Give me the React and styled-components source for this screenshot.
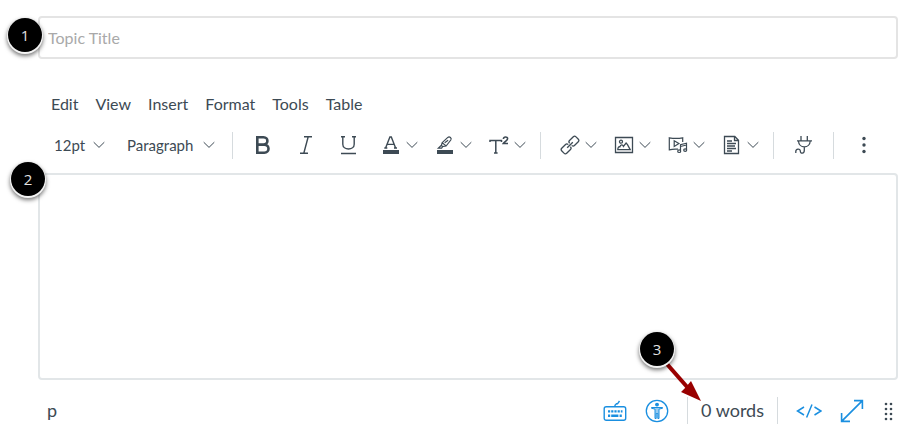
import styled, {createGlobalStyle} from "styled-components";

const ink = "#3d4a54";
const blue = "#1a8fe0";
const line = "#d6dbde";

const GlobalStyle = createGlobalStyle`
  * {
    box-sizing: border-box;
  }
  body {
    margin: 0;
    background: #fff;
    color: ${ink};
    font-family: Lato, "Liberation Sans", sans-serif;
  }
`;

const Page = styled.main`
  display: flex;
  flex-direction: column;
  padding: 16px 6px 0 38px;
`;

const Anchor = styled.div`
  position: relative;
  display: flex;
`;

const TitleInput = styled.input`
  width: 100%;
  height: 43px;
  padding: 0 8px;
  border: 2px solid #e4e4e4;
  border-radius: 4px;
  background: #fff;
  color: ${ink};
  font: inherit;
  font-size: 16px;
  &::placeholder {
    color: #a9a9a9;
    opacity: 1;
  }
`;

const MenuBar = styled.nav`
  display: flex;
  gap: 17px;
  margin-top: 32px;
  padding-left: 13px;
`;

const MenuButton = styled.button`
  padding: 0;
  border: 0;
  background: transparent;
  color: inherit;
  font: inherit;
  font-size: 16px;
  line-height: 26px;
  cursor: pointer;
`;

const Toolbar = styled.div`
  display: flex;
  align-items: center;
  height: 56px;
`;

const Group = styled.div`
  display: flex;
  align-items: center;
  height: 27px;
  padding: 0 8px;
  & + & {
    border-left: 1px solid ${line};
  }
`;

const FormatGroup = styled(Group)`
  gap: 22px;
  padding: 0 17px 0 16px;
`;

const SelectWrap = styled.label`
  display: flex;
  align-items: center;
  width: ${props => props.$width};
  select {
    flex: 1;
    min-width: 0;
    padding: 0;
    border: 0;
    appearance: none;
    background: transparent;
    color: inherit;
    font: inherit;
    font-size: 15px;
    cursor: pointer;
  }
`;

const ToolButton = styled.button`
  display: flex;
  align-items: center;
  justify-content: center;
  width: 43px;
  height: 32px;
  padding: 0;
  border: 0;
  background: transparent;
  color: inherit;
  cursor: pointer;
`;

const SplitButton = styled(ToolButton)`
  justify-content: flex-end;
  gap: 5px;
  width: 54px;
  padding-right: 6px;
`;

const EditorArea = styled.textarea`
  width: 100%;
  height: 207px;
  padding: 12px;
  border: 2px solid #e2e6e8;
  border-radius: 4px;
  background: #fff;
  color: ${ink};
  font: inherit;
  resize: none;
`;

const StatusBar = styled.footer`
  display: flex;
  align-items: center;
  justify-content: space-between;
  padding: 17px 4px 0 9px;
  font-size: 18px;
  line-height: 27px;
`;

const StatusTools = styled.div`
  display: flex;
  align-items: center;
  gap: 18px;
`;

const WordCount = styled.div`
  position: relative;
  padding: 0 13px;
  border: solid ${line};
  border-width: 0 1px;
`;

const StatusButton = styled.button`
  display: flex;
  padding: 0;
  border: 0;
  background: transparent;
  color: ${props => props.$dark ? ink : blue};
  cursor: pointer;
`;

const Badge = styled.span`
  position: absolute;
  left: ${props => props.$left};
  top: ${props => props.$top};
  display: flex;
  align-items: center;
  justify-content: center;
  width: 34px;
  height: 34px;
  border-radius: 50%;
  background: #000;
  box-shadow: 0 1px 0 1px #f4f4f4, 0 3px 4px 1px rgba(0, 0, 0, .55);
  color: #e2e2e2;
  font-family: "Open Sans", sans-serif;
  font-size: 15px;
  line-height: 20px;
`;

const Arrow = styled.svg`
  position: absolute;
  left: -22px;
  top: -36px;
  pointer-events: none;
`;

function Icon({width = 20, height = 20, weight = 1.2, children}) {
  return (
    <svg width={width} height={height} viewBox={`0 0 ${width} ${height}`} fill="none"
      stroke="currentColor" strokeWidth={weight} aria-hidden="true">
      {children}
    </svg>
  );
}

function Chevron() {
  return (
    <Icon width={12} height={8} weight={1}>
      <path d="M.7 1.2 6 6.4l5.3-5.2" />
    </Icon>
  );
}

const BoldIcon = () => (
  <Icon weight={2.6}>
    <path d="M4.3 2.3h6.2c5.2 0 5.2 7.3 0 7.3H4.3zM4.3 9.6h7c5.6 0 5.6 8.1 0 8.1h-7z" />
  </Icon>
);

const ItalicIcon = () => (
  <Icon weight={1.4}>
    <path d="M8 1.7h8M4 18.3h8M12.2 1.7l-4.4 16.6" />
  </Icon>
);

const UnderlineIcon = () => (
  <Icon weight={1.4}>
    <path d="M2 1.7h4M13 1.7h4M3.8 1.7v7.5c0 6.4 11.4 6.4 11.4 0V1.7M2 18.5h15" />
  </Icon>
);

const TextColorIcon = () => (
  <Icon>
    <path strokeWidth="1.4" d="m4.6 13 4.3-11h1.4l4.3 11M6.2 9.4h6.9M3.3 13h3M13 13h3" />
    <path fill="currentColor" stroke="none" d="M2 15h16v4H2z" />
  </Icon>
);

const HighlightIcon = () => (
  <Icon>
    <path d="m7.2 7.6 5.6-5.2c1.8-1.3 4.2.8 3 2.6l-4.700 6-3.700.5-1-1.200zM7.500 8l3.600 2.900M9.700 7.700l3.400-2.500M6.400 10.300l-3 2.800h3.200l1.200-1.400" />
    <path fill="currentColor" stroke="none" d="M2 15h16v4H2z" />
  </Icon>
);

const SuperscriptIcon = () => (
  <Icon>
    <path strokeWidth="1.5" d="M1 7V5.600h11.500V7M6.800 5.600V18M5 18h3.600" />
    <path strokeWidth="1.6" d="M14.400 4c.2-2.700 4.200-2.500 4.200-.3 0 1.800-3.100 2.800-4.300 4.800H19" />
  </Icon>
);

const LinkIcon = () => (
  <Icon weight={1.3}>
    <g transform="rotate(-45 10 10)">
      <path d="M9 11.500c0 1.300-.6 2-1.800 2H1.800c-1.200 0-1.800-.7-1.800-2v-3c0-1.300.6-2 1.800-2h5.400c1.200 0 1.800.7 1.800 2" />
      <path d="M11 8.500c0-1.300.6-2 1.800-2h5.400c1.200 0 1.800.7 1.800 2v3c0 1.300-.6 2-1.800 2h-5.400c-1.200 0-1.800-.7-1.800-2" />
      <path d="M6 10h8" />
    </g>
  </Icon>
);

const ImageIcon = () => (
  <Icon weight={1.3}>
    <path d="M1.500 2.500h17v15h-17z" />
    <circle cx="7" cy="6.700" r="1.500" />
    <path d="M3.800 14.600c0-2 .8-3.200 2.100-2.800.6-2.400 2.800-2.500 3.500-.4l2.700-3.400 1.400 1.600 2.700 5z" />
  </Icon>
);

const MediaIcon = () => (
  <Icon>
    <path d="M10 14.200c-3-.2-6-.1-8.700.6V2.800c4.500.9 8.900.9 13.400 0V7" />
    <path d="M6.200 5.800v5.600l4.700-2.800z" />
    <path d="M12.500 15.800V9.700l6-1.500v6.500M12.500 11.500l6-1.500" />
    <ellipse cx="11.200" cy="16.200" rx="1.500" ry="1.300" />
    <ellipse cx="17.200" cy="15.100" rx="1.500" ry="1.300" />
  </Icon>
);

const DocumentIcon = () => (
  <Icon weight={1.3}>
    <path d="M2.500 1.500h10.300l3.700 3.700v13.300h-14zM12.500 1.500v4h4" />
    <path d="M5 6h5M5 8.500h9M5 11h8M5 13.500h9M5 16h5" />
  </Icon>
);

const PlugIcon = () => (
  <Icon weight={1.3}>
    <path d="M7 1v4.500M13.300 1v4.500M3 5.800h15M4.500 6c.2 7.800 11.500 7.800 11.700 0M10.300 12v3.300c0 3.800-4 3.700-4 .8 0-2.800-4.500-2.600-4.500.5V18" />
  </Icon>
);

const MoreIcon = () => (
  <Icon>
    <g fill="currentColor" stroke="none">
      <circle cx="10" cy="3.500" r="1.700" />
      <circle cx="10" cy="10" r="1.700" />
      <circle cx="10" cy="16.500" r="1.700" />
    </g>
  </Icon>
);

const KeyboardIcon = () => (
  <Icon width={24} height={24} weight={1.4}>
    <rect x="1.200" y="7.700" width="21.500" height="13.600" rx="2" />
    <path d="M12 7.500V6.300l1.500-1.500h1l2-2.800" />
    <path strokeWidth="2.400" strokeDasharray="2.200 1" d="M5 12.400h14.500" />
    <path strokeWidth="2.400" d="M5 16.700h2.200M8.200 16.700h7.200M16.600 16.700h2.200" />
  </Icon>
);

const AccessibilityIcon = () => (
  <Icon width={24} height={24} weight={1.3}>
    <circle cx="12" cy="12" r="10.700" />
    <circle cx="12" cy="5.600" r="1.300" fill="currentColor" />
    <path d="M6.500 8.500h11v.8l-3.500.8v9.400h-1.200v-5h-1.600v5H10v-9.400l-3.500-.8z" strokeWidth="1" fill="currentColor" fillOpacity=".45" />
  </Icon>
);

const CodeIcon = () => (
  <Icon width={26} height={20} weight={1.5}>
    <path d="M8 6 1.500 10 8 14M18.500 6l6.500 4-6.500 4M16 3.500l-5.400 13" />
  </Icon>
);

const ExpandIcon = () => (
  <Icon width={24} height={24} weight={1.6}>
    <path d="M1.600 22.400 22.400 1.600M14 1.600h8.400V10M1.600 14v8.400H10" />
  </Icon>
);

const DragIcon = () => (
  <Icon width={12} height={20}>
    <g fill="currentColor" stroke="none">
      {[3, 8, 13, 18].map(y => (
        <g key={y}>
          <circle cx="4" cy={y} r="1.300" />
          <circle cx="9" cy={y} r="1.300" />
        </g>
      ))}
    </g>
  </Icon>
);

const menus = ["Edit", "View", "Insert", "Format", "Tools", "Table"];

const styleTools = [
  ["Bold", BoldIcon],
  ["Italic", ItalicIcon],
  ["Underline", UnderlineIcon],
];

const colorTools = [
  ["Text color", TextColorIcon],
  ["Background color", HighlightIcon],
  ["Superscript and subscript", SuperscriptIcon],
];

const insertTools = [
  ["Links", LinkIcon],
  ["Images", ImageIcon],
  ["Record or upload media", MediaIcon],
  ["Documents", DocumentIcon],
];

function renderTools(tools) {
  return tools.map(([label, Glyph]) => (
    <ToolButton key={label} type="button" aria-label={label}>
      <Glyph />
    </ToolButton>
  ));
}

function renderSplitTools(tools) {
  return tools.map(([label, Glyph]) => (
    <SplitButton key={label} type="button" aria-label={label}>
      <Glyph />
      <Chevron />
    </SplitButton>
  ));
}

export default function App() {
  return (
    <>
      <GlobalStyle />
      <Page>
        <Anchor>
          <TitleInput type="text" placeholder="Topic Title" aria-label="Topic Title" />
          <Badge $left="-30px" $top="2px">1</Badge>
        </Anchor>
        <MenuBar>
          {menus.map(name => (
            <MenuButton key={name} type="button">{name}</MenuButton>
          ))}
        </MenuBar>
        <Toolbar role="toolbar">
          <FormatGroup>
            <SelectWrap $width="51px">
              <select aria-label="Font size">
                <option>12pt</option>
              </select>
              <Chevron />
            </SelectWrap>
            <SelectWrap $width="88px">
              <select aria-label="Block style">
                <option>Paragraph</option>
              </select>
              <Chevron />
            </SelectWrap>
          </FormatGroup>
          <Group>
            {renderTools(styleTools)}
            {renderSplitTools(colorTools)}
          </Group>
          <Group>
            {renderSplitTools(insertTools)}
          </Group>
          <Group>
            {renderTools([["Apps", PlugIcon]])}
          </Group>
          <Group>
            {renderTools([["More", MoreIcon]])}
          </Group>
        </Toolbar>
        <Anchor>
          <EditorArea aria-label="Topic content" />
          <Badge $left="-27px" $top="-11px">2</Badge>
        </Anchor>
        <StatusBar>
          <span>p</span>
          <StatusTools>
            <StatusButton type="button" aria-label="Keyboard shortcuts">
              <KeyboardIcon />
            </StatusButton>
            <StatusButton type="button" aria-label="Accessibility checker">
              <AccessibilityIcon />
            </StatusButton>
            <WordCount>
              0 words
              <Arrow width="36" height="42" viewBox="0 0 36 42" aria-hidden="true">
                <path d="M1 3 22 27" stroke="#990000" strokeWidth="4" />
                <path d="M35 40 15 31l5-5 5-6z" fill="#990000" />
              </Arrow>
              <Badge $left="-48px" $top="-65px">3</Badge>
            </WordCount>
            <StatusButton type="button" aria-label="HTML editor">
              <CodeIcon />
            </StatusButton>
            <StatusButton type="button" aria-label="Fullscreen">
              <ExpandIcon />
            </StatusButton>
            <StatusButton type="button" aria-label="Resize" $dark>
              <DragIcon />
            </StatusButton>
          </StatusTools>
        </StatusBar>
      </Page>
    </>
  );
}
